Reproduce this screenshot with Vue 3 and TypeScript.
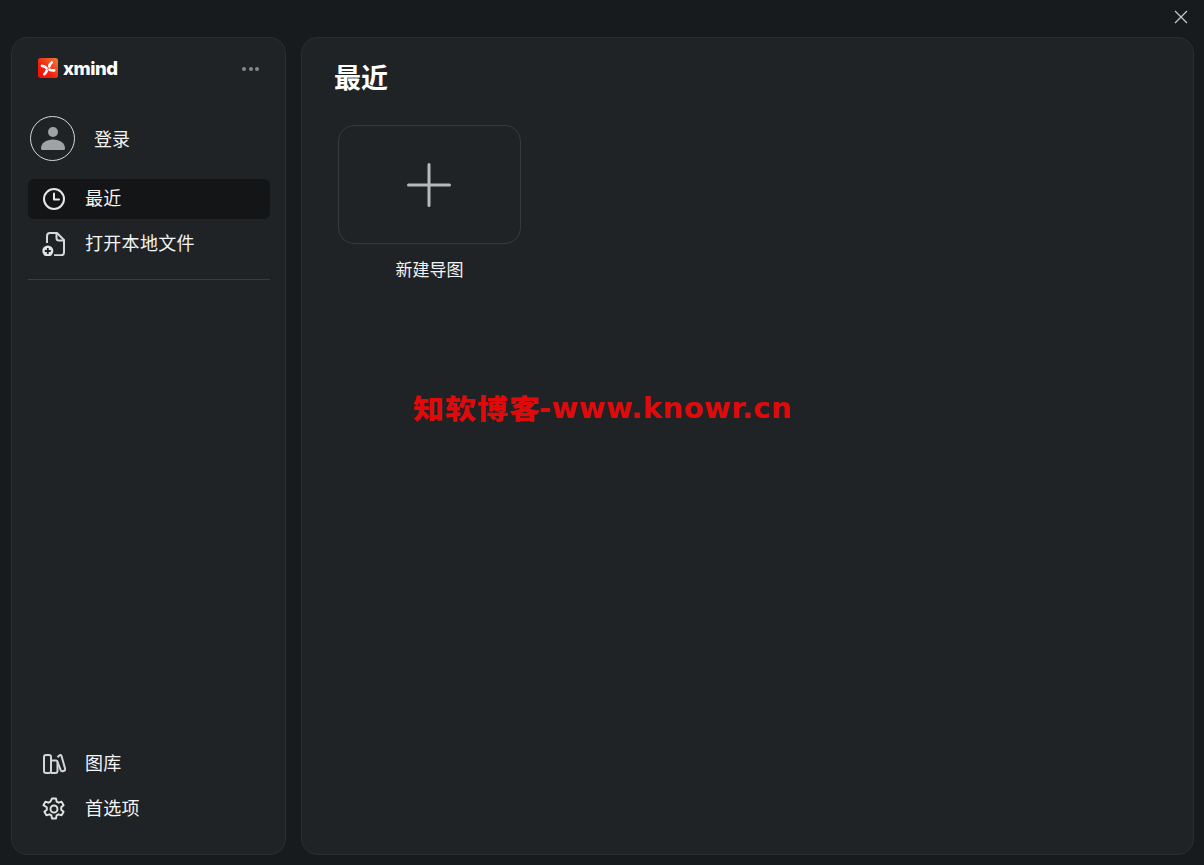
<script setup lang="ts">
const wordmark = 'xmind'
</script>

<template>
  <div class="window">
    <header class="titlebar">
      <svg class="close" width="16" height="16" viewBox="0 0 16 16" fill="none">
        <path d="M2 2l12 12M14 2L2 14" stroke="#c4c6c7" stroke-width="1.3" />
      </svg>
    </header>
    <div class="panels">
      <aside class="sidebar">
        <div class="brand">
          <div class="logo">
            <svg width="20" height="20" viewBox="0 0 20 20">
              <defs>
                <linearGradient id="lg" x1="1" y1="0" x2="0" y2="1">
                  <stop offset="0" stop-color="#f0813a" />
                  <stop offset="0.6" stop-color="#f2200e" />
                  <stop offset="1" stop-color="#f40c08" />
                </linearGradient>
              </defs>
              <rect width="20" height="20" rx="2.5" fill="url(#lg)" />
              <path d="M4 7.800C6 8 7.600 8.800 8.600 10.200M11.300 8.400C11.600 6.800 12.400 5.500 13.800 4.500M11.400 11.600C12.800 12.400 14.300 12.600 16.200 12.400M8.700 12.800C8.400 14.200 7.700 15.400 6.400 16.200" stroke="#fff" stroke-width="2.700" fill="none" stroke-linecap="round" />
            </svg>
            <span class="wordmark">{{ wordmark }}</span>
          </div>
          <div class="dots"><i></i><i></i><i></i></div>
        </div>

        <div class="login">
          <div class="avatar">
            <svg width="26" height="26" viewBox="0 0 26 26" fill="#a0a3a5">
              <circle cx="13" cy="7" r="5" />
              <path d="M1 23.500c0-5.500 5-9 12-9s12 3.500 12 9c0 .8-.5 1.500-1.500 1.500h-21c-1 0-1.500-.7-1.500-1.500z" />
            </svg>
          </div>
          <span>登录</span>
        </div>

        <nav class="nav">
          <a class="item active">
            <svg width="24" height="24" viewBox="0 0 24 24" fill="none" stroke="#e6e7e7" stroke-width="2">
              <circle cx="12" cy="12" r="10" />
              <path d="M12 6.500V12.500H17" stroke-linecap="round" stroke-linejoin="round" />
            </svg>
            <span>最近</span>
          </a>
          <a class="item">
            <svg width="24" height="24" viewBox="0 0 24 24" fill="none">
              <path d="M5 11V4C5 2.300 6.200 1 8 1h7l7 7v12.500c0 1.700-1 2.700-2.700 2.700H12" stroke="#d8d9da" stroke-width="2" stroke-linejoin="round" />
              <path d="M14.500 1.500V6c0 1.500.8 2.500 2.500 2.500h4.500" stroke="#d8d9da" stroke-width="2" />
              <circle cx="5.800" cy="19" r="5.500" fill="#e2e3e3" />
              <path d="M5.800 16v6M2.800 19h6" stroke="#1f2326" stroke-width="1.800" />
            </svg>
            <span>打开本地文件</span>
          </a>
        </nav>

        <div class="divider"></div>
        <div class="spacer"></div>

        <nav class="nav bottom">
          <a class="item">
            <svg width="24" height="24" viewBox="0 0 24 24" fill="none" stroke="#d4d5d6" stroke-width="2" stroke-linejoin="round">
              <rect x="2" y="3" width="7" height="18" rx="2" />
              <path d="M9 8.500h5c1 0 1.500.6 1.500 1.500v9c0 1.300-.7 2-2 2H9" />
              <path d="M15.500 5.200l1.800-1.700c.8-.7 1.800-.5 2.200.4l3.600 12.800c.3 1-.1 1.700-1 2l-1.400.5c-.9.3-1.600 0-1.900-.9L15.500 10" />
            </svg>
            <span>图库</span>
          </a>
          <a class="item">
            <svg width="24" height="24" viewBox="0 0 24 24" fill="none" stroke="#e2e3e3" stroke-width="1.900" stroke-linejoin="round">
              <circle cx="12" cy="12" r="3.500" />
              <path d="M10 1.500h4l.6 3.100 2 1.100 3-1 2 3.500-2.400 2.100v2.400l2.400 2.100-2 3.500-3-1-2 1.100-.6 3.100h-4l-.6-3.100-2-1.100-3 1-2-3.500 2.400-2.100v-2.400L1.400 8.200l2-3.500 3 1 2-1.100z" />
            </svg>
            <span>首选项</span>
          </a>
        </nav>
      </aside>

      <main class="content">
        <h1>最近</h1>
        <div class="grid">
          <div class="card">
            <button class="new">
              <svg width="44" height="44" viewBox="0 0 44 44" fill="none" stroke="#b8b9ba" stroke-width="3" stroke-linecap="round">
                <path d="M22 1.500v41M1.500 22h41" />
              </svg>
            </button>
            <div class="label">新建导图</div>
          </div>
        </div>
      </main>
    </div>
    <div class="watermark"><b>知软博客</b><span>-www.knowr.cn</span></div>
  </div>
</template>

<style>
html, body { margin: 0; background: #181b1e; }
</style>

<style scoped>
.window {
  position: relative;
  width: 1204px;
  height: 865px;
  box-sizing: border-box;
  overflow: hidden;
  display: flex;
  flex-direction: column;
  background: #181b1e;
  color: #fff;
  font-family: "Noto Sans CJK SC", "Noto Sans", sans-serif;
}
.titlebar {
  height: 37px;
  flex: none;
  display: flex;
  justify-content: flex-end;
  align-items: flex-start;
  padding: 9px 15px 0 0;
  box-sizing: border-box;
}
.panels {
  flex: 1;
  display: flex;
  gap: 15px;
  padding: 0 10px 10px 11px;
  min-height: 0;
}
.sidebar {
  width: 275px;
  box-sizing: border-box;
  flex: none;
  display: flex;
  flex-direction: column;
  background: #1f2326;
  border: 1px solid #2a2e31;
  border-radius: 16px;
  padding: 0 15px 25px 16px;
}
.brand {
  display: flex;
  align-items: center;
  justify-content: space-between;
  height: 60px;
  padding: 0 11px 0 10px;
}
.logo { display: flex; align-items: center; gap: 5px; }
.wordmark {
  font: 800 18.500px/20px "Inter", sans-serif;
  letter-spacing: -0.500px;
  color: #fff;
}
.dots { display: flex; gap: 2.500px; margin-top: 1px; }
.dots i { width: 4px; height: 4px; border-radius: 50%; background: #85888a; }
.login {
  display: flex;
  align-items: center;
  gap: 19px;
  height: 46px;
  margin-top: 17px;
  padding-left: 2px;
  font-size: 18px;
  color: #f4f4f4;
}
.avatar {
  width: 45px;
  height: 45px;
  box-sizing: border-box;
  border: 1.500px solid #d6d7d8;
  border-radius: 50%;
  display: flex;
  align-items: center;
  justify-content: center;
}
.nav { display: flex; flex-direction: column; gap: 5px; }
.login + .nav { margin-top: 18px; }
.item {
  display: flex;
  align-items: center;
  gap: 19px;
  height: 40px;
  padding-left: 14px;
  border-radius: 6px;
  font-size: 18px;
  line-height: 24px;
  letter-spacing: 0.300px;
  color: #f4f4f4;
}
.item span { margin-top: -4px; }
.item svg { flex: none; margin-top: -1px; }
.item.active { background: #131517; }
.divider { height: 1px; background: #3a3d40; margin-top: 15px; }
.spacer { flex: 1; }
.content {
  flex: 1;
  background: #1f2326;
  border: 1px solid #2a2e31;
  border-radius: 16px;
  padding: 22px 32px;
  box-sizing: border-box;
}
h1 {
  margin: -1px 0 2px;
  font-size: 27px;
  line-height: 36px;
  font-weight: 700;
  color: #fff;
}
.grid { display: flex; margin-top: 30px; padding-left: 4px; }
.card { width: 183px; }
.new {
  display: flex;
  align-items: center;
  justify-content: center;
  width: 183px;
  height: 119px;
  padding: 0 1px 0 0;
  background: transparent;
  border: 1px solid #37393c;
  border-radius: 16px;
}
.label {
  margin-top: 13px;
  text-align: center;
  font-size: 17px;
  line-height: 24px;
  color: #f4f4f4;
}
.watermark {
  position: absolute;
  left: 413px;
  top: 386px;
  display: flex;
  align-items: center;
  color: #e00a0a;
  white-space: nowrap;
  line-height: 44px;
}
.watermark b { font-size: 31px; font-weight: 900; letter-spacing: 1px; transform: scaleY(0.88); }
.watermark span { font: 700 29px/44px "DejaVu Sans", sans-serif; letter-spacing: 0.450px; margin-left: -2px; }
</style>
